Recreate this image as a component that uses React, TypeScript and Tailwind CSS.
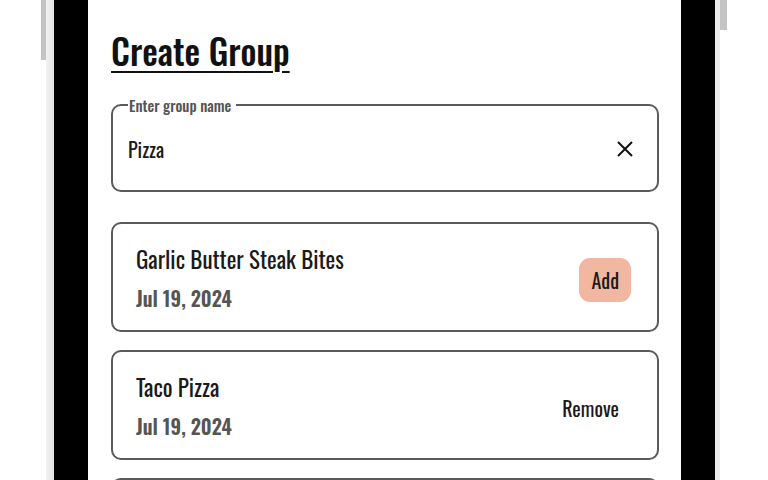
type Recipe = {
  title: string;
  date: string;
  added: boolean;
};

const recipes: Recipe[] = [
  { title: "Garlic Butter Steak Bites", date: "Jul 19, 2024", added: false },
  { title: "Taco Pizza", date: "Jul 19, 2024", added: true },
];

function CloseIcon() {
  return (
    <svg viewBox="0 0 16 16" className="h-[16px] w-[16px]" fill="none" stroke="#111" strokeWidth={2}>
      <path d="M1 1 L15 15 M15 1 L1 15" />
    </svg>
  );
}

function RecipeCard({ recipe }: { recipe: Recipe }) {
  return (
    <div className="flex h-[110px] shrink-0 items-center justify-between rounded-[10px] border-2 border-[#5b5b5b] pl-[23px] pr-[26px] pt-[2px]">
      <div className="flex flex-col gap-[10px]">
        <span className="text-[23px] leading-[30px] text-[#1a1a1a]">{recipe.title}</span>
        <span className="text-[20px] font-semibold leading-[28px] text-[#555]">{recipe.date}</span>
      </div>
      {recipe.added ? (
        <button className="mt-[4px] flex h-[44px] items-center px-[12px] text-[20px] text-[#1a1a1a]">Remove</button>
      ) : (
        <button className="mt-[4px] flex h-[44px] items-center rounded-[11px] bg-[#f2b7a0] px-[12px] text-[20px] text-[#1a1a1a]">
          Add
        </button>
      )}
    </div>
  );
}

export default function App() {
  return (
    <div className="flex h-[480px] w-[768px] overflow-hidden bg-white font-['Oswald','Open_Sans',sans-serif]">
      <div className="w-[41px] shrink-0" />
      <div className="h-[60px] w-[5px] shrink-0 bg-[#c4c4c4]" />
      <div className="w-[8px] shrink-0 bg-gradient-to-r from-[#f2f2f2] to-[#e4e4e4]" />
      <div className="w-[34px] shrink-0 bg-black" />

      <main className="flex w-[593px] shrink-0 flex-col bg-white pl-[23px] pr-[22px] pt-[26px]">
        <h1 className="text-[35px] font-medium leading-[48px] text-[#111] underline decoration-[2px] underline-offset-[5px]">
          Create Group
        </h1>

        <fieldset className="mt-[23px] h-[95px] shrink-0 rounded-[10px] border-2 border-[#5b5b5b] pl-[15px] pr-[24px]">
          <legend className="pl-[1px] pr-[5px] text-[15px] font-medium leading-[16px] text-[#555]">Enter group name</legend>
          <div className="flex h-[71px] items-center justify-between">
            <span className="text-[20px] text-[#1a1a1a]">Pizza</span>
            <CloseIcon />
          </div>
        </fieldset>

        <div className="mt-[30px] flex flex-col gap-[18px]">
          {recipes.map((recipe) => (
            <RecipeCard key={recipe.title} recipe={recipe} />
          ))}
          {/* next card, scrolled below the fold */}
          <div className="h-[110px] shrink-0 rounded-[10px] border-2 border-[#5b5b5b]" />
        </div>
      </main>

      <div className="w-[34px] shrink-0 bg-black" />
      <div className="w-[5px] shrink-0 bg-[#ececec]" />
      <div className="h-[30px] w-[7px] shrink-0 bg-[#c4c4c4]" />
      <div className="flex-1" />
    </div>
  );
}
